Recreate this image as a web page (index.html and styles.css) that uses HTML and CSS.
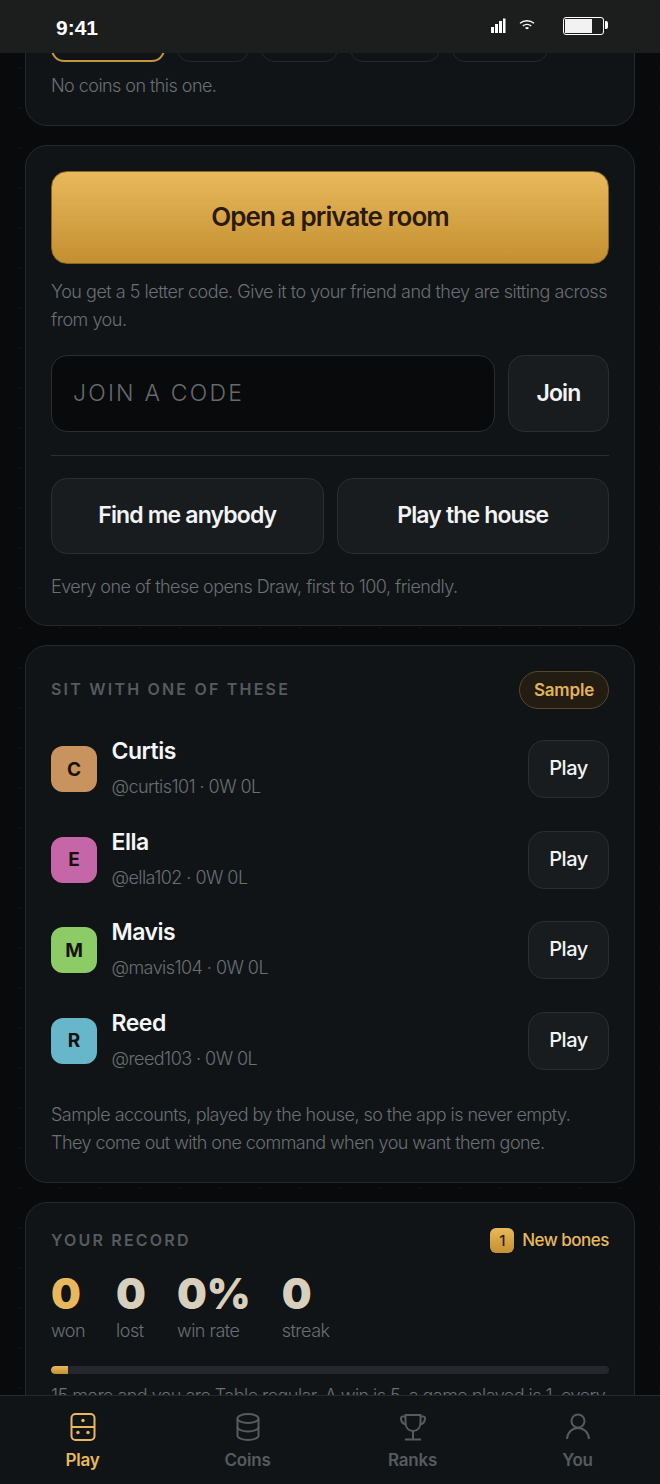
FILE: index.html
```html
<!DOCTYPE html>
<html lang="en">
<head>
    <meta charset="UTF-8">
    <meta name="viewport" content="width=device-width, initial-scale=1.0">
    <title>Play - Bones</title>
    <link rel="stylesheet" href="styles.css">
</head>
<body>
    <!-- Status bar sits over the scrolled page -->
    <div class="status-bar">
        <span class="status-time">9:41</span>
        <div class="status-icons">
            <svg class="icon-signal" width="16" height="16" viewBox="0 0 16 16" fill="#fff">
                <rect x="1" y="9" width="3" height="6"/>
                <rect x="5" y="6" width="3" height="9"/>
                <rect x="9" y="3" width="3" height="12"/>
                <rect x="13" y="0.5" width="2.5" height="14.5"/>
            </svg>
            <svg class="icon-wifi" width="16" height="12" viewBox="0 0 16 12" fill="none" stroke="#fff" stroke-width="1.4">
                <path d="M1 4.2C5 1 11 1 15 4.2"/>
                <path d="M3.8 6.8C6.4 5 9.6 5 12.2 6.8"/>
                <path d="M6.6 9.4C7.5 8.8 8.5 8.8 9.4 9.4" stroke-width="1.8"/>
            </svg>
            <div class="battery"><div class="battery-fill"></div></div>
        </div>
    </div>

    <main class="screen">
        <section class="card card-stakes">
            <div class="chips">
                <span class="chip chip-on"></span>
                <span class="chip chip-a"></span>
                <span class="chip chip-b"></span>
                <span class="chip chip-c"></span>
                <span class="chip chip-d"></span>
            </div>
            <p class="muted">No coins on this one.</p>
        </section>

        <section class="card card-room">
            <button class="btn-gold">Open a private room</button>
            <p class="muted room-help">You get a 5 letter code. Give it to your friend and they are sitting across from you.</p>
            <div class="join-row">
                <div class="code-input">JOIN A CODE</div>
                <button class="btn btn-join">Join</button>
            </div>
            <div class="divider"></div>
            <div class="quick-row">
                <button class="btn btn-quick">Find me anybody</button>
                <button class="btn btn-quick">Play the house</button>
            </div>
            <p class="muted room-note">Every one of these opens Draw, first to 100, friendly.</p>
        </section>

        <section class="card card-people">
            <div class="card-head">
                <h2 class="eyebrow">SIT WITH ONE OF THESE</h2>
                <span class="pill">Sample</span>
            </div>
            <div class="people">
                <div class="person">
                    <div class="avatar avatar-c">C</div>
                    <div class="person-text">
                        <div class="person-name">Curtis</div>
                        <div class="person-sub">@curtis101 · 0W 0L</div>
                    </div>
                    <button class="btn btn-play">Play</button>
                </div>
                <div class="person">
                    <div class="avatar avatar-e">E</div>
                    <div class="person-text">
                        <div class="person-name">Ella</div>
                        <div class="person-sub">@ella102 · 0W 0L</div>
                    </div>
                    <button class="btn btn-play">Play</button>
                </div>
                <div class="person">
                    <div class="avatar avatar-m">M</div>
                    <div class="person-text">
                        <div class="person-name">Mavis</div>
                        <div class="person-sub">@mavis104 · 0W 0L</div>
                    </div>
                    <button class="btn btn-play">Play</button>
                </div>
                <div class="person">
                    <div class="avatar avatar-r">R</div>
                    <div class="person-text">
                        <div class="person-name">Reed</div>
                        <div class="person-sub">@reed103 · 0W 0L</div>
                    </div>
                    <button class="btn btn-play">Play</button>
                </div>
            </div>
            <p class="muted people-note">Sample accounts, played by the house, so the app is never empty. They come out with one command when you want them gone.</p>
        </section>

        <section class="card card-record">
            <div class="card-head record-head">
                <h2 class="eyebrow">YOUR RECORD</h2>
                <div class="bones"><span class="bones-count">1</span>New bones</div>
            </div>
            <div class="stats">
                <div class="stat"><div class="stat-num stat-gold">0</div><div class="stat-label">won</div></div>
                <div class="stat"><div class="stat-num">0</div><div class="stat-label">lost</div></div>
                <div class="stat"><div class="stat-num">0%</div><div class="stat-label">win rate</div></div>
                <div class="stat"><div class="stat-num">0</div><div class="stat-label">streak</div></div>
            </div>
            <div class="progress"><div class="progress-fill" style="width: 3%"></div></div>
            <p class="muted">15 more and you are Table regular. A win is 5, a game played is 1, every</p>
        </section>
    </main>

    <nav class="tabbar">
        <a class="tab tab-on">
            <svg width="32" height="32" viewBox="0 0 32 32" fill="none" stroke="currentColor" stroke-width="2">
                <rect x="4.5" y="3" width="23" height="26" rx="4"/>
                <path d="M4.5 16H27.5"/>
                <g fill="currentColor" stroke="none">
                    <circle cx="16" cy="9.5" r="1.7"/>
                    <circle cx="11" cy="21.5" r="1.7"/>
                    <circle cx="21" cy="21.5" r="1.7"/>
                </g>
            </svg>
            <span>Play</span>
        </a>
        <a class="tab">
            <svg width="32" height="32" viewBox="0 0 32 32" fill="none" stroke="currentColor" stroke-width="2">
                <ellipse cx="16" cy="7.5" rx="10.5" ry="4.5"/>
                <path d="M5.5 7.5V24.5C5.5 27 10.2 29 16 29S26.5 27 26.5 24.5V7.5"/>
                <path d="M5.5 16C5.5 18.5 10.2 20.5 16 20.5S26.5 18.5 26.5 16"/>
            </svg>
            <span>Coins</span>
        </a>
        <a class="tab">
            <svg width="32" height="32" viewBox="0 0 32 32" fill="none" stroke="currentColor" stroke-width="2">
                <path d="M8.5 4H23.5V11C23.5 16.5 20.5 20 16 20S8.5 16.5 8.5 11V4Z"/>
                <path d="M8.5 5.5H6C4.5 5.5 3.8 6.5 4 8C4.4 11 6.4 13 9 13.5"/>
                <path d="M23.5 5.5H26C27.5 5.5 28.2 6.5 28 8C27.6 11 25.6 13 23 13.5"/>
                <path d="M16 20V28M8 28.5H24"/>
            </svg>
            <span>Ranks</span>
        </a>
        <a class="tab">
            <svg width="32" height="32" viewBox="0 0 32 32" fill="none" stroke="currentColor" stroke-width="2">
                <circle cx="16" cy="10" r="6.5"/>
                <path d="M5 28C5.5 21.5 10 17 16 17S26.5 21.5 27 28"/>
            </svg>
            <span>You</span>
        </a>
    </nav>
</body>
</html>
```

FILE: styles.css
```css
/* Basic styles */
*, *::before, *::after {
    box-sizing: border-box;
    margin: 0;
    padding: 0;
}

html, body {
    height: 1484px;
    overflow: hidden;
}

body {
    position: relative;
    font-family: Inter, "Noto Sans", sans-serif;
    color: #f2f3f4;
    background-color: #090a0c;
    background-image: radial-gradient(rgba(255, 255, 255, 0.035) 1px, transparent 1.2px);
    background-size: 40px 40px;
    background-position: 0 8px;
}

button {
    font-family: inherit;
    cursor: pointer;
}

/* Status bar */
.status-bar {
    position: absolute;
    top: 0;
    left: 0;
    right: 0;
    height: 53px;
    padding: 0 56px 0 56px;
    display: flex;
    align-items: center;
    justify-content: space-between;
    background-color: #1c1d1d;
    z-index: 10;
}

.status-time {
    font-family: "Liberation Sans", Arial, sans-serif;
    font-size: 21px;
    font-weight: 700;
    color: #fff;
    padding-top: 3px;
}

.status-icons {
    display: flex;
    align-items: center;
}

.icon-wifi {
    margin-left: 13px;
    margin-bottom: 4px;
}

.icon-signal {
    margin-bottom: 2px;
}

.battery {
    position: relative;
    width: 41px;
    height: 18px;
    margin-left: 28px;
    margin-bottom: 1px;
    padding: 1px;
    background-color: #1c1d1d;
    border: 1.5px solid #fff;
    border-radius: 3px;
}

.battery::after {
    content: "";
    position: absolute;
    top: 3px;
    right: -5px;
    width: 3px;
    height: 8px;
    background-color: #fff;
    border-radius: 0 2px 2px 0;
}

.battery-fill {
    width: 72%;
    height: 100%;
    background-color: #f2f2f2;
}

/* Page */
.screen {
    margin-top: -10px;
    padding: 0 25px;
    display: flex;
    flex-direction: column;
    gap: 19px;
}

.card {
    padding: 25px;
    background-color: #111417;
    border: 1px solid #25292d;
    border-radius: 22px;
}

.muted {
    font-size: 18px;
    font-weight: 300;
    line-height: 28px;
    letter-spacing: -0.55px;
    color: #6a6f73;
}

/* Stakes */
.chips {
    display: flex;
    gap: 12px;
    margin-bottom: 10px;
}

.chip {
    height: 46px;
    border: 1px solid #25292d;
    border-radius: 13px;
}

.chip-on {
    width: 114px;
    border: 2px solid #c4953c;
}

.chip-a { width: 72px; }
.chip-b { width: 77px; }
.chip-c { width: 90px; }
.chip-d { width: 96px; }

/* Private room */
.btn-gold {
    width: 100%;
    height: 93px;
    padding-bottom: 2px;
    font-size: 26px;
    font-weight: 600;
    letter-spacing: -0.9px;
    color: #2a1a06;
    background: linear-gradient(180deg, #e8b95c, #c48f30);
    border: 1px solid #8a6420;
    border-radius: 16px;
}

.card-room {
    padding-bottom: 24px;
}

.room-help {
    margin-top: 14px;
    letter-spacing: -0.48px;
}

.join-row {
    display: flex;
    gap: 13px;
    margin-top: 21px;
}

.code-input {
    flex: 1;
    height: 77px;
    padding: 0 0 2px 21px;
    display: flex;
    align-items: center;
    font-size: 23px;
    font-weight: 300;
    letter-spacing: 2.2px;
    color: #666a6e;
    background-color: #090a0c;
    border: 1px solid #2a2e32;
    border-radius: 16px;
}

.btn {
    padding-bottom: 2px;
    font-weight: 600;
    letter-spacing: -0.85px;
    color: #f2f3f4;
    background-color: #191c1f;
    border: 1px solid #2a2e32;
    border-radius: 16px;
}

.btn-join {
    width: 101px;
    font-size: 23px;
}

.divider {
    height: 1px;
    margin: 23px 0 22px;
    background-color: #2a2e32;
}

.quick-row {
    display: flex;
    gap: 13px;
}

.btn-quick {
    flex: 1;
    height: 76px;
    font-size: 23px;
}

.room-note {
    margin-top: 19px;
}

/* People */
.card-head {
    display: flex;
    align-items: center;
    justify-content: space-between;
}

.eyebrow {
    font-size: 16px;
    font-weight: 600;
    letter-spacing: 2.2px;
    color: #565b5f;
}

.card-people .eyebrow {
    padding-bottom: 2px;
}

.pill {
    height: 38px;
    padding: 0 14px;
    display: flex;
    align-items: center;
    font-size: 17px;
    font-weight: 600;
    letter-spacing: -0.2px;
    color: #e3b25a;
    background-color: #221c12;
    border: 1px solid #5a4727;
    border-radius: 19px;
}

.people {
    display: flex;
    flex-direction: column;
    gap: 32.5px;
    margin-top: 31px;
}

.person {
    display: flex;
    align-items: center;
    height: 58px;
}

.avatar {
    width: 46px;
    height: 46px;
    display: flex;
    align-items: center;
    justify-content: center;
    font-size: 19px;
    font-weight: 700;
    color: #17120c;
    border-radius: 12px;
}

.avatar-c { background-color: #c9935f; }
.avatar-e { background-color: #c566a8; }
.avatar-m { background-color: #8ccb65; }
.avatar-r { background-color: #67b6c9; }

.person-text {
    flex: 1;
    margin-left: 14.5px;
}

.person-name {
    font-size: 23px;
    font-weight: 600;
    line-height: 28px;
    letter-spacing: -0.5px;
    color: #f5f6f7;
}

.person-sub {
    margin-top: 8px;
    font-size: 18px;
    font-weight: 300;
    line-height: 28px;
    letter-spacing: -0.55px;
    color: #6a6f73;
}

.btn-play {
    width: 81px;
    height: 58px;
    font-size: 20px;
    font-weight: 500;
    letter-spacing: -0.5px;
}

.people-note {
    margin-top: 31px;
}

/* Record */
.record-head {
    height: 25px;
}

.bones {
    display: flex;
    align-items: center;
    font-size: 17px;
    font-weight: 500;
    letter-spacing: -0.5px;
    color: #e8b95c;
}

.bones-count {
    width: 24px;
    height: 25px;
    margin-right: 8px;
    display: flex;
    align-items: center;
    justify-content: center;
    font-size: 15px;
    color: #2a1a06;
    background: linear-gradient(180deg, #e8b95c, #c48f30);
    border-radius: 6px;
}

.stats {
    display: flex;
    gap: 31px;
    margin-top: 18px;
}

.stat-num {
    font-size: 42px;
    font-weight: 900;
    line-height: 46px;
    color: #d8cfbc;
}

.stat-gold {
    color: #e8b95c;
}

.stat-label {
    font-size: 18px;
    font-weight: 300;
    line-height: 28px;
    letter-spacing: -0.5px;
    color: #6a6f73;
}

.progress {
    height: 8px;
    margin-top: 21px;
    background-color: #24282c;
    border-radius: 4px;
    overflow: hidden;
}

.progress-fill {
    height: 100%;
    background: linear-gradient(180deg, #e8b95c, #c48f30);
    border-radius: 4px 0 0 4px;
}

.card-record .muted {
    margin-top: 8px;
}

/* Bottom tabs */
.tabbar {
    position: absolute;
    left: 0;
    right: 0;
    bottom: 0;
    height: 89px;
    display: grid;
    grid-template-columns: repeat(4, 1fr);
    background-color: #111417;
    border-top: 1px solid #25292d;
    z-index: 10;
}

.tab {
    padding-top: 15px;
    display: flex;
    flex-direction: column;
    align-items: center;
    gap: 7px;
    font-size: 17px;
    font-weight: 600;
    letter-spacing: -0.2px;
    color: #565b5f;
}

.tab-on {
    color: #e8b95c;
}
```
